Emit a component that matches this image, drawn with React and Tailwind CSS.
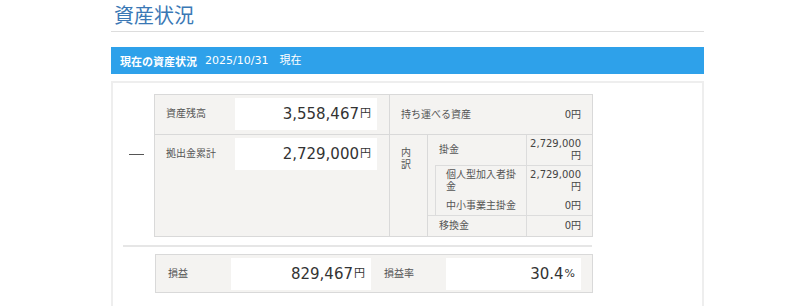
const labelCls = "text-[10px] leading-[12px] text-[#555]";
const smallVal = "text-[10px] leading-[12px] text-[#444] text-right";

function BigValue({ value, unit, className }) {
  return (
    <div className={`bg-white flex items-center justify-end pr-[6px] h-[32px] ${className}`}>
      <span className="text-[15px] leading-[20px] text-[#333]">{value}</span>
      <span className="text-[11px] leading-[20px] text-[#333] ml-[1px]">{unit}</span>
    </div>
  );
}

function BreakdownRow({ label, value, labelPad = "pl-[11px]", className = "" }) {
  return (
    <div className={`flex ${className}`}>
      <div className={`flex-1 flex items-center ${labelPad} ${labelCls}`}>{label}</div>
      <div className={`w-[66px] border-l border-[#dcdcdc] flex items-center justify-end pl-[4px] pr-[11px] ${smallVal}`}>
        {value}
      </div>
    </div>
  );
}

export default function App() {
  return (
    <div className="min-h-[306px] bg-white font-['DejaVu_Sans','Noto_Sans_CJK_JP',sans-serif]">
      <div className="ml-[111px] w-[593px]">
        <h1 className="h-[32px] border-b border-[#dddddd] pl-[3px] pt-[1px] text-[20px] leading-[28px] text-[#3a78b5] font-['Noto_Sans_CJK_JP',sans-serif]">
          資産状況
        </h1>

        <div className="mt-[15px] h-[27px] bg-[#2ea1ea] flex items-center pl-[9px] text-white text-[11px] leading-[14px]">
          <span className="font-bold font-['Noto_Sans_CJK_JP',sans-serif]">現在の資産状況</span>
          <span className="ml-[8px]">2025/10/31　現在</span>
        </div>

        <div className="mt-[7px] border-2 border-[#eeeeee] pt-[11px] pb-[30px]">
          <div className="flex">
            {/* minus sign between balance and contributions */}
            <div className="w-[41px] flex justify-center pt-[52px] pl-[6px]">
              <div className="mt-[8px] w-[15px] h-[1px] bg-[#555]" />
            </div>

            <div className="w-[439px] border border-[#d9d9d9] bg-[#f4f3f1] flex">
              <div className="w-[235px] border-r border-[#d9d9d9]">
                <div className="h-[40px] border-b border-[#d9d9d9] flex items-start pt-[3px]">
                  <div className={`w-[80px] pl-[11px] h-[32px] flex items-center ${labelCls}`}>資産残高</div>
                  <BigValue value="3,558,467" unit="円" className="w-[142px]" />
                </div>
                <div className="flex items-start pt-[3px]">
                  <div className={`w-[80px] pl-[11px] h-[32px] flex items-center ${labelCls}`}>拠出金累計</div>
                  <BigValue value="2,729,000" unit="円" className="w-[142px]" />
                </div>
              </div>

              <div className="flex-1">
                <div className="h-[40px] border-b border-[#d9d9d9] flex items-center justify-between pl-[11px] pr-[11px]">
                  <span className={labelCls}>持ち運べる資産</span>
                  <span className={smallVal}>0円</span>
                </div>
                <div className="flex h-[101px]">
                  <div className={`w-[38px] border-r border-[#d9d9d9] pl-[11px] pt-[12px] ${labelCls}`}>
                    内<br />訳
                  </div>
                  <div className="flex-1 flex flex-col">
                    <BreakdownRow label="掛金" value={<>2,729,000<br />円</>} className="h-[30px]" />
                    <div className="ml-[7px] border-l border-t border-[#dcdcdc]">
                      <BreakdownRow
                        label={<>個人型加入者掛<br />金</>}
                        value={<>2,729,000<br />円</>}
                        labelPad="pl-[10px]"
                        className="h-[30px]"
                      />
                      <BreakdownRow label="中小事業主掛金" value="0円" labelPad="pl-[10px]" className="h-[19px]" />
                    </div>
                    <BreakdownRow label="移換金" value="0円" className="h-[21px] border-t border-[#dcdcdc]" />
                  </div>
                </div>
              </div>
            </div>
          </div>

          <div className="ml-[10px] mt-[8px] w-[469px] h-[2px] bg-[#e6e6e6]" />

          <div className="ml-[42px] mt-[7px] w-[438px] h-[39px] border border-[#d9d9d9] bg-[#f4f3f1] flex items-center">
            <div className={`w-[75px] pl-[12px] ${labelCls}`}>損益</div>
            <BigValue value="829,467" unit="円" className="w-[140px] h-[31px]" />
            <div className={`w-[75px] pl-[13px] ${labelCls}`}>損益率</div>
            <BigValue value="30.4" unit="%" className="w-[135px] h-[31px]" />
          </div>
        </div>
      </div>
    </div>
  );
}
